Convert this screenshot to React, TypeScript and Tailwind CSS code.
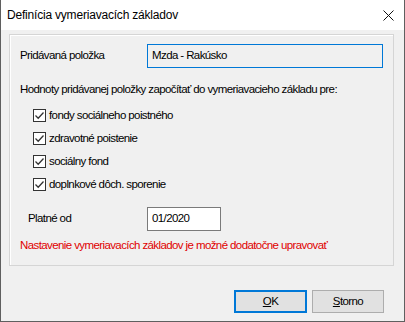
import React from "react";

const items = [
  "fondy sociálneho poistného",
  "zdravotné poistenie",
  "sociálny fond",
  "doplnkové dôch. sporenie",
];

const CheckBox = () => (
  <span className="w-[13px] h-[13px] border border-[#333333] bg-white flex items-center justify-center shrink-0">
    <svg width="11" height="11" viewBox="0 0 11 11">
      <path d="M1.5 5.5 L4.2 8.2 L9.5 2.5" fill="none" stroke="#333333" strokeWidth="1.3" />
    </svg>
  </span>
);

const App: React.FC = () => (
  <div
    className="w-[405px] h-[322px] bg-[#f0f0f0] border-x border-b border-[#5f5f5f] flex flex-col text-[11.5px] tracking-[-0.6px] text-black"
    style={{ fontFamily: '"Liberation Sans", Arial, sans-serif' }}
  >
    {/* title bar */}
    <div className="h-[30px] bg-white flex items-center justify-between pl-[6px] pr-[10px] shrink-0">
      <span className="text-[12px] tracking-[-0.2px]">Definícia vymeriavacích základov</span>
      <svg width="11" height="11" viewBox="0 0 11 11">
        <path d="M0.5 0.5 L10.5 10.5 M10.5 0.5 L0.5 10.5" stroke="#111111" strokeWidth="1" />
      </svg>
    </div>

    {/* group panel */}
    <div className="mt-[4px] ml-[8px] mr-[10px] h-[232px] border border-[#d5d5d5] shadow-[inset_1px_1px_0_#ffffff] flex flex-col pl-[10px] pr-[10px]">
      <div className="mt-[9px] flex items-center h-[24px]">
        <span className="w-[127px]">Pridávaná položka</span>
        <div className="w-[236px] h-[24px] border border-[#0078d7] bg-[#f0f0f0] flex items-center pl-[4px]">
          Mzda - Rakúsko
        </div>
      </div>

      <div className="mt-[14px] leading-[14px]">
        Hodnoty pridávanej položky započítať do vymeriavacieho základu pre:
      </div>

      <div className="mt-[8px] flex flex-col pl-[13px]">
        {items.map((label) => (
          <div key={label} className="h-[23px] flex items-center gap-[3px]">
            <CheckBox />
            <span>{label}</span>
          </div>
        ))}
      </div>

      <div className="mt-[11px] flex items-center h-[24px]">
        <span className="w-[127px] pl-[8px]">Platné od</span>
        <div className="w-[74px] h-[24px] border border-[#7a7a7a] bg-white flex items-center pl-[4px]">
          01/2020
        </div>
      </div>

      <div className="mt-[7px] leading-[14px] text-[#e00000]">
        Nastavenie vymeriavacích základov je možné dodatočne upravovať
      </div>
    </div>

    {/* buttons */}
    <div className="mt-[24px] flex justify-end gap-[5px] pr-[20px]">
      <button className="w-[73px] h-[23px] border-2 border-[#0078d7] bg-[#e1e1e1]">
        <span className="underline">O</span>K
      </button>
      <button className="w-[72px] h-[23px] border border-[#adadad] bg-[#e1e1e1]">
        <span className="underline">S</span>torno
      </button>
    </div>
  </div>
);

export default App;
